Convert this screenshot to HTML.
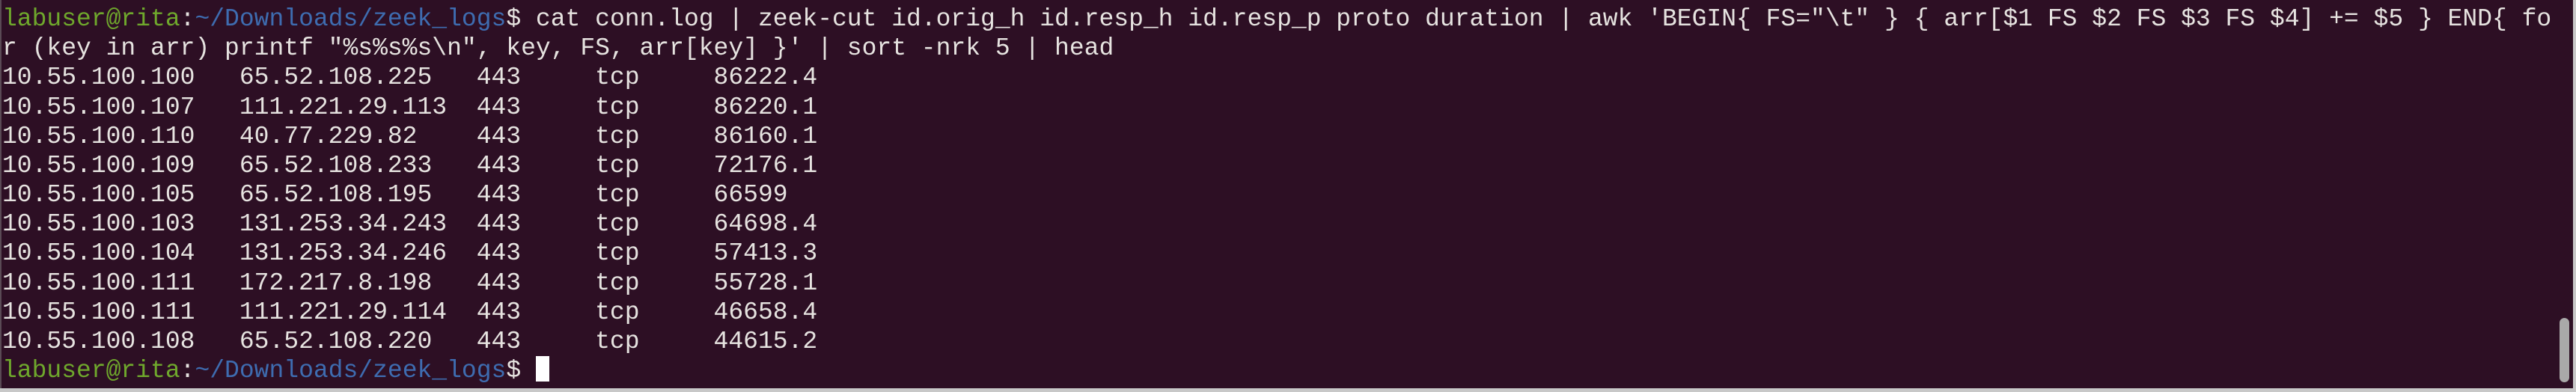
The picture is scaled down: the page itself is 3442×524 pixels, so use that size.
<!DOCTYPE html>
<html><head><meta charset="utf-8"><style>
html,body{margin:0;padding:0;}
body{width:3442px;height:524px;background:#2d0f24;overflow:hidden;position:relative;}
pre{margin:0;position:absolute;left:3px;top:6px;font-family:"Liberation Mono","DejaVu Sans Mono",monospace;font-size:33px;line-height:39.17px;color:#e6e3e0;white-space:pre;letter-spacing:0px;}
.g{color:#6fa82c;}
.b{color:#3e6cb0;}
.cur{display:inline-block;width:18px;height:34px;background:#fff;vertical-align:-6px;}
.sb{position:absolute;left:3420px;top:425px;width:13px;height:86px;border-radius:7px;background:#a9a9a9;}
.bot{position:absolute;left:0;top:519px;width:3442px;height:5px;background:#c8c8c8;}
.rt{position:absolute;left:3438px;top:0;width:4px;height:524px;background:#c8c8c8;}
.lt{position:absolute;left:0;top:0;width:2px;height:524px;background:#5a4a55;}
</style></head><body>
<pre><span class="g">labuser@rita</span>:<span class="b">~/Downloads/zeek_logs</span>$ cat conn.log | zeek-cut id.orig_h id.resp_h id.resp_p proto duration | awk 'BEGIN{ FS="\t" } { arr[$1 FS $2 FS $3 FS $4] += $5 } END{ fo
r (key in arr) printf "%s%s%s\n", key, FS, arr[key] }' | sort -nrk 5 | head
10.55.100.100   65.52.108.225   443     tcp     86222.4
10.55.100.107   111.221.29.113  443     tcp     86220.1
10.55.100.110   40.77.229.82    443     tcp     86160.1
10.55.100.109   65.52.108.233   443     tcp     72176.1
10.55.100.105   65.52.108.195   443     tcp     66599
10.55.100.103   131.253.34.243  443     tcp     64698.4
10.55.100.104   131.253.34.246  443     tcp     57413.3
10.55.100.111   172.217.8.198   443     tcp     55728.1
10.55.100.111   111.221.29.114  443     tcp     46658.4
10.55.100.108   65.52.108.220   443     tcp     44615.2
<span class="g">labuser@rita</span>:<span class="b">~/Downloads/zeek_logs</span>$ <span class="cur"></span></pre>
<div class="sb"></div>
<div class="lt"></div>
<div class="rt"></div>
<div class="bot"></div>
</body></html>
